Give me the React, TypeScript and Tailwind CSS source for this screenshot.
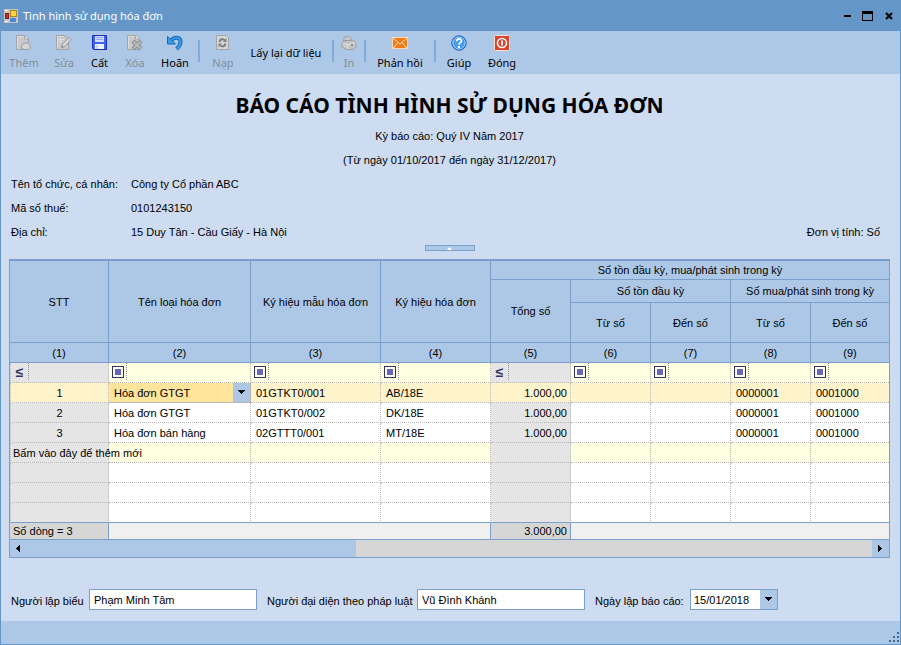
import React from "react";

type IconProps = { children: React.ReactNode };

const Icon = ({ children }: IconProps) => (
  <svg width="16" height="16" viewBox="0 0 16 16" aria-hidden="true" className="block">
    {children}
  </svg>
);

const PageShape = () => (
  <>
    <path d="M0.500 0.500h8l4 3v11h-12z" fill="#c8c9ca" stroke="#a2a4a7" />
    <path d="M1.500 1.500v12M1.500 1.500h6" fill="none" stroke="#dddddd" />
  </>
);

const AddIcon = () => (
  <Icon>
    <PageShape />
    <path d="M8.500 0.500v3.500h4" fill="#e6e6e6" stroke="#a2a4a7" />
    <path d="M5.500 11 7 9.500 8 8h2l1-.5 1.500 1 1.500 1.500 .5 3-2 1.500H8l-2.500-1.500z" fill="#d4d4d4" stroke="#9b9c9e" />
  </Icon>
);

const EditIcon = () => (
  <Icon>
    <PageShape />
    <path d="M3 4.500h5M3 6.500h3" stroke="#e4e4e4" />
    <path d="m5.500 12.500 1-3.500 6.500-6.500 2 2L9 11.500z" fill="#d9d9d9" stroke="#949597" />
    <path d="m5.500 12.500 2-.5-1.500-1.500z" fill="#808183" />
  </Icon>
);

const SaveIcon = () => (
  <Icon>
    <path d="M0.500 0.500h14v14h-13l-1-1z" fill="#3f66ea" stroke="#1a2cc0" />
    <rect x="3" y="1" width="9" height="6" fill="#d3def9" />
    <path d="M4 2.500h7M4 4.500h7" stroke="#93a9ee" />
    <rect x="3" y="9" width="9" height="5" fill="#eef2fc" />
    <rect x="4" y="10" width="2" height="4" fill="#c6d2f6" />
  </Icon>
);

const DeleteIcon = () => (
  <Icon>
    <PageShape />
    <path d="M8.500 0.500v3.500h4" fill="#e6e6e6" stroke="#a2a4a7" />
    <path d="m6 6 8 8m0-8-8 8" stroke="#8a8b8d" strokeWidth="4" />
    <path d="m6.500 6.500 7 7m0-7-7 7" stroke="#bcbcbc" strokeWidth="2" />
  </Icon>
);

const UndoIcon = () => (
  <Icon>
    <path d="M4 5.500c3.500-4 9-3.500 9.500.5.300 3-1 5.500-4 8" fill="none" stroke="#1769b8" strokeWidth="4" />
    <path d="M4 5.500c3.500-4 9-3.500 9.500.5.300 3-1 5.500-4 8" fill="none" stroke="#3b9de8" strokeWidth="2" />
    <path d="M0.500 1.500v7.500h8L5.500 6z" fill="#3b9de8" stroke="#1769b8" />
  </Icon>
);

const ReloadIcon = () => (
  <Icon>
    <path d="M1.500 0.500h10l2 2v12h-12z" fill="#d6d6d6" stroke="#a2a4a7" />
    <path d="M4.500 7c.5-3 3-3.500 5-2M10.500 8.500c-.5 3-3 3.500-5 2" fill="none" stroke="#7c7d7f" strokeWidth="2" />
    <path d="M11.500 3v4H8zM3.500 12.500v-4H7z" fill="#7c7d7f" />
  </Icon>
);

const PrintIcon = () => (
  <Icon>
    <path d="M2.500 5.500 3.500 2l5-.5 2.500 4z" fill="#c9c9c9" stroke="#a3a4a6" />
    <path d="M1 8.500 3 6l9-1 3 3v4l-3 2.500H5L1 12z" fill="#c6c6c6" stroke="#9b9c9e" />
    <path d="m1.500 8.500 5 1.500v4M6.500 10l8-2" fill="none" stroke="#e0e0e0" />
    <rect x="10" y="9" width="2" height="2" fill="#8d8d8d" />
  </Icon>
);

const MailIcon = () => (
  <Icon>
    <rect x="0.500" y="2.500" width="15" height="11" fill="#f47a16" stroke="#fbd9b4" />
    <path d="m1.500 3.500 6.500 5.500 6.500-5.500M1.500 13l4.500-5.500M14.500 13 10 7.500" fill="none" stroke="#ffe6cc" />
  </Icon>
);

const HelpIcon = () => (
  <Icon>
    <circle cx="8" cy="8" r="7.200" fill="#4a9bea" stroke="#1d5fae" />
    <circle cx="8" cy="8" r="6" fill="none" stroke="#9fd0fa" />
    <path d="M5.800 6.200c0-3 4.600-3 4.600-.3C10.400 7.600 8 7.600 8 9.800" fill="none" stroke="#ffffff" strokeWidth="1.600" />
    <rect x="7" y="11" width="2" height="2" fill="#ffffff" />
  </Icon>
);

const CloseIcon = () => (
  <Icon>
    <rect x="0.500" y="0.500" width="15" height="15" rx="1" fill="#d9442a" stroke="#f8ded8" />
    <circle cx="8" cy="8" r="4.500" fill="none" stroke="#ffffff" strokeWidth="1.600" />
    <path d="M8 5.500v5" stroke="#ffffff" strokeWidth="1.800" />
  </Icon>
);

const AppIcon = () => (
  <svg width="14" height="14" viewBox="0 0 14 14" aria-hidden="true" className="block">
    <rect width="14" height="14" fill="#c9c4bd" />
    <rect x="1.500" y="4.500" width="3" height="5" fill="#c0302a" stroke="#7c2320" />
    <rect x="6.500" y="1.500" width="6" height="6" fill="#ffd43c" stroke="#a88424" />
    <rect x="6" y="9" width="6" height="4" fill="#4c86dc" />
    <path d="M1 1.500h3M1 12.500h3" stroke="#f4f4f4" />
  </svg>
);

const Arrow = ({ dir }: { dir: "down" | "left" | "right" }) => {
  const d = { down: "M0 1h7L3.500 5z", left: "M5 0v7L1 3.500z", right: "M1 0v7l4-3.500z" }[dir];
  return (
    <svg width="7" height="7" viewBox="0 0 7 7" aria-hidden="true" className="block" shapeRendering="crispEdges">
      <path d={d} fill="#000000" />
    </svg>
  );
};

type ToolProps = { label: string; width: string; icon: React.ReactNode; disabled?: boolean };

const Tool = ({ label, width, icon, disabled }: ToolProps) => (
  <button
    type="button"
    disabled={disabled}
    className={`flex h-full shrink-0 flex-col items-center gap-1 whitespace-nowrap pt-1 leading-4 text-black disabled:text-[#858c96] ${width}`}
  >
    {icon}
    {label}
  </button>
);

const Divider = () => <div className="mx-[3px] mt-[9px] h-[22px] w-[2px] shrink-0 bg-[#82abda]" />;

const headCell = "border-b border-r border-[#7b9fcb] p-0 font-normal last:border-r-0";
const dotted = "border-b border-r border-dotted border-[#b9b9b9] last:border-r-0";

const ListFilter = ({ name }: { name: string }) => (
  <td className={`p-0 ${dotted} bg-[#ffffe1]`}>
    <div className="flex h-[19px]">
      <div className="mb-[2px] flex w-[18px] shrink-0 justify-center border-r border-dotted border-[#909090] pt-[3px]">
        <button type="button" aria-label={`Lọc ${name}`} className="flex h-3 w-3 items-center justify-center border border-[#333355] bg-white">
          <span className="block h-[6px] w-[6px] bg-[#6666bb]" />
        </button>
      </div>
      <input aria-label={name} className="w-0 flex-1 bg-transparent px-1 outline-none" />
    </div>
  </td>
);

const NumberFilter = ({ name, first }: { name: string; first?: boolean }) => (
  <td className={`bg-[#e5e5e5] p-0 ${dotted} ${first ? "border-l" : ""}`}>
    <div className="flex h-[19px]">
      <button
        type="button"
        aria-label={`Lọc ${name}`}
        className="mb-[2px] w-[18px] shrink-0 border-r border-dotted border-[#909090] text-center text-sm font-bold leading-4 text-[#333366]"
      >
        ≤
      </button>
      <input aria-label={name} className="w-0 flex-1 bg-transparent px-1 outline-none" />
    </div>
  </td>
);

const rows = [
  { no: 1, name: "Hóa đơn GTGT", form: "01GTKT0/001", sign: "AB/18E" },
  { no: 2, name: "Hóa đơn GTGT", form: "01GTKT0/002", sign: "DK/18E" },
  { no: 3, name: "Hóa đơn bán hàng", form: "02GTTT0/001", sign: "MT/18E" },
];

const InvoiceTable = () => (
  <table className="w-full table-fixed border-separate border-spacing-0">
    <colgroup>
      <col className="w-[99px]" />
      <col className="w-[142px]" />
      <col className="w-[130px]" />
      <col className="w-[110px]" />
      <col className="w-[80px]" />
      <col className="w-[80px]" />
      <col className="w-[80px]" />
      <col className="w-[80px]" />
      <col />
    </colgroup>
    <thead className="bg-[#adc8e6]">
      <tr className="h-[19px]">
        <th rowSpan={3} className={headCell}>STT</th>
        <th rowSpan={3} className={headCell}>Tên loại hóa đơn</th>
        <th rowSpan={3} className={headCell}>Ký hiệu mẫu hóa đơn</th>
        <th rowSpan={3} className={headCell}>Ký hiệu hóa đơn</th>
        <th colSpan={5} className={headCell}>Số tồn đầu kỳ, mua/phát sinh trong kỳ</th>
      </tr>
      <tr className="h-[23px]">
        <th rowSpan={2} className={headCell}>Tổng số</th>
        <th colSpan={2} className={headCell}>Số tồn đầu kỳ</th>
        <th colSpan={2} className={headCell}>Số mua/phát sinh trong kỳ</th>
      </tr>
      <tr className="h-10">
        <th className={headCell}>Từ số</th>
        <th className={headCell}>Đến số</th>
        <th className={headCell}>Từ số</th>
        <th className={headCell}>Đến số</th>
      </tr>
      <tr className="h-5">
        {[1, 2, 3, 4, 5, 6, 7, 8, 9].map((n) => (
          <th key={n} className={headCell}>({n})</th>
        ))}
      </tr>
    </thead>
    <tbody>
      <tr className="h-5">
        <NumberFilter name="STT" first />
        <ListFilter name="Tên loại hóa đơn" />
        <ListFilter name="Ký hiệu mẫu hóa đơn" />
        <ListFilter name="Ký hiệu hóa đơn" />
        <NumberFilter name="Tổng số" />
        <ListFilter name="Tồn từ số" />
        <ListFilter name="Tồn đến số" />
        <ListFilter name="Mua từ số" />
        <ListFilter name="Mua đến số" />
      </tr>
      {rows.map((r, i) => {
        const fill = i === 0 ? "bg-[#fff3cb]" : "bg-white";
        const lock = i === 0 ? "bg-[#fff3cb]" : "bg-[#e5e5e5]";
        return (
          <tr key={r.no} className="h-5">
            <td className={`border-l p-0 text-center ${dotted} ${lock}`}>{r.no}</td>
            {i === 0 ? (
              <td className="border-b border-r border-[#b4b4b4] bg-[#ffe49b] p-0">
                <div className="relative">
                  <select aria-label="Tên loại hóa đơn" className="block h-[19px] w-full appearance-none bg-transparent pl-[5px] outline-none">
                    <option>Hóa đơn GTGT</option>
                    <option>Hóa đơn bán hàng</option>
                  </select>
                  <span className="pointer-events-none absolute inset-y-0 right-0 flex w-[17px] items-center justify-center bg-[#adc8e6]">
                    <Arrow dir="down" />
                  </span>
                </div>
              </td>
            ) : (
              <td className={`py-0 pl-[5px] pr-0 ${dotted} ${fill}`}>{r.name}</td>
            )}
            <td className={`py-0 pl-[5px] pr-0 ${dotted} ${fill}`}>{r.form}</td>
            <td className={`py-0 pl-[5px] pr-0 ${dotted} ${fill}`}>{r.sign}</td>
            <td className={`py-0 pl-0 pr-[3px] text-right ${dotted} ${lock}`}>1.000,00</td>
            <td className={`p-0 ${dotted} ${fill}`} />
            <td className={`p-0 ${dotted} ${fill}`} />
            <td className={`py-0 pl-[5px] pr-0 ${dotted} ${fill}`}>0000001</td>
            <td className={`py-0 pl-[5px] pr-0 ${dotted} ${fill}`}>0001000</td>
          </tr>
        );
      })}
      <tr className="h-5">
        <td className={`border-l bg-[#e5e5e5] py-0 pl-[2px] pr-0 ${dotted}`}>
          <button type="button" className="block whitespace-nowrap">Bấm vào đây để thêm mới</button>
        </td>
        {[2, 3, 4, 5, 6, 7, 8, 9].map((c) => (
          <td key={c} className={`p-0 ${dotted} ${c === 5 ? "bg-[#e5e5e5]" : "bg-[#ffffe1]"}`} />
        ))}
      </tr>
      {[0, 1, 2].map((b) => (
        <tr key={b} className="h-5">
          {[1, 2, 3, 4, 5, 6, 7, 8, 9].map((c) => (
            <td
              key={c}
              className={`p-0 ${c === 1 ? "border-l" : ""} ${dotted} ${
                b === 2 ? "[border-bottom:1px_solid_#7b9fcb]" : ""
              } ${c === 1 || c === 5 ? "bg-[#e5e5e5]" : "bg-white"}`}
            />
          ))}
        </tr>
      ))}
    </tbody>
    <tfoot className="bg-[#f0f0f0]">
      <tr className="h-[17px]">
        <td className="border-b border-r border-[#7b9fcb] bg-[#d6d6d6] py-0 pl-[3px] pr-0">Số dòng = 3</td>
        <td colSpan={3} className="border-b border-r border-[#7b9fcb] p-0" />
        <td className="border-b border-r border-[#7b9fcb] bg-[#d6d6d6] py-0 pl-0 pr-[3px] text-right">3.000,00</td>
        <td colSpan={4} className="border-b border-[#7b9fcb] p-0" />
      </tr>
    </tfoot>
  </table>
);

export default function App() {
  return (
    <div className="flex min-h-screen flex-col border-x border-b border-[#6496c8] bg-[#cddcf1] font-['Liberation_Sans',sans-serif] text-[11px] leading-4 text-black">
      <header className="flex h-[31px] shrink-0 items-center justify-between bg-[#6496c8] pl-[3px] pr-[6px] font-['Noto_Sans',sans-serif]">
        <div className="flex items-center gap-[5px] text-white">
          <AppIcon />
          <span>Tình hình sử dụng hóa đơn</span>
        </div>
        <div className="flex items-center gap-[11px]">
          <button type="button" aria-label="Thu nhỏ" className="flex h-3 w-[7px] items-center">
            <span className="block h-[2px] w-full bg-black" />
          </button>
          <button type="button" aria-label="Phóng to" className="block h-[10px] w-[11px] border border-t-[3px] border-black" />
          <button type="button" aria-label="Đóng cửa sổ" className="block">
            <svg width="10" height="8" viewBox="0 0 10 8" aria-hidden="true">
              <path d="m2 1 6 6m0-6-6 6" stroke="#000000" strokeWidth="2.200" />
            </svg>
          </button>
        </div>
      </header>

      <nav aria-label="Thanh công cụ" className="flex h-[43px] shrink-0 items-start bg-[#adc8e6] pl-[3px] font-['Noto_Sans',sans-serif]">
        <Tool label="Thêm" width="w-10" icon={<AddIcon />} disabled />
        <Tool label="Sửa" width="w-10" icon={<EditIcon />} disabled />
        <Tool label="Cất" width="w-[31px]" icon={<SaveIcon />} />
        <Tool label="Xóa" width="w-10" icon={<DeleteIcon />} disabled />
        <Tool label="Hoãn" width="w-10" icon={<UndoIcon />} />
        <Divider />
        <Tool label="Nạp" width="w-10" icon={<ReloadIcon />} disabled />
        <button type="button" className="h-full w-[86px] shrink-0 whitespace-nowrap">Lấy lại dữ liệu</button>
        <Divider />
        <Tool label="In" width="w-6" icon={<PrintIcon />} disabled />
        <Divider />
        <Tool label="Phản hồi" width="w-[62px]" icon={<MailIcon />} />
        <Divider />
        <Tool label="Giúp" width="w-10" icon={<HelpIcon />} />
        <Tool label="Đóng" width="w-[46px]" icon={<CloseIcon />} />
      </nav>

      <main className="flex flex-1 flex-col pb-[11px] pl-2 pr-[10px]">
        <h1 className="pt-[17px] text-center font-['Noto_Sans',sans-serif] text-[21px] font-bold leading-7">BÁO CÁO TÌNH HÌNH SỬ DỤNG HÓA ĐƠN</h1>
        <div className="pt-[5px] text-center leading-6">
          <p>Kỳ báo cáo: Quý IV Năm 2017</p>
          <p>(Từ ngày 01/10/2017 đến ngày 31/12/2017)</p>
        </div>
        <div className="flex items-end justify-between pl-[2px] pr-[10px] leading-6">
          <dl className="grid grid-cols-[120px_auto]">
            <dt>Tên tổ chức, cá nhân:</dt>
            <dd>Công ty Cổ phần ABC</dd>
            <dt>Mã số thuế:</dt>
            <dd>0101243150</dd>
            <dt>Địa chỉ:</dt>
            <dd>15 Duy Tân - Cầu Giấy - Hà Nội</dd>
          </dl>
          <p>Đơn vị tính: Số</p>
        </div>
        <button
          type="button"
          aria-label="Thu gọn"
          className="mx-auto mb-2 mt-px flex h-[6px] w-[50px] shrink-0 items-center justify-center border border-[#7b9fcb] bg-[#adc8e6]"
        >
          <svg width="7" height="4" viewBox="0 0 7 4" aria-hidden="true" className="block">
            <path d="M1 4h5L3.500 1z" fill="#ffffff" />
          </svg>
        </button>

        <div className="border border-t-2 border-[#7b9fcb]">
          <InvoiceTable />
          <div className="flex h-[17px] bg-[#d6d6d6]">
            <button type="button" aria-label="Cuộn trái" className="flex w-[17px] items-center justify-center bg-[#adc8e6]">
              <Arrow dir="left" />
            </button>
            <div className="w-[329px] bg-[#adc8e6]" />
            <button type="button" aria-label="Cuộn phải" className="ml-auto flex w-[17px] items-center justify-center bg-[#adc8e6]">
              <Arrow dir="right" />
            </button>
          </div>
        </div>

        <form className="mt-auto flex items-center pl-[2px] pt-[31px]">
          <label htmlFor="preparer" className="w-[78px] shrink-0 whitespace-nowrap pt-[2px]">Người lập biểu</label>
          <input id="preparer" defaultValue="Phạm Minh Tâm" className="mr-[10px] h-[21px] w-[168px] border border-[#7b9fcb] bg-white px-1 outline-none" />
          <label htmlFor="representative" className="w-[150px] shrink-0 whitespace-nowrap pt-[2px]">Người đại diện theo pháp luật</label>
          <input id="representative" defaultValue="Vũ Đình Khánh" className="mr-[10px] h-[21px] w-[168px] border border-[#7b9fcb] bg-white px-1 outline-none" />
          <label htmlFor="report-date" className="w-[95px] shrink-0 whitespace-nowrap pt-[2px]">Ngày lập báo cáo:</label>
          <div className="flex h-[21px] w-[88px] border border-[#7b9fcb] bg-white">
            <input id="report-date" defaultValue="15/01/2018" className="w-0 flex-1 pl-[3px] outline-none" />
            <button type="button" aria-label="Chọn ngày" className="flex w-[17px] items-center justify-center bg-[#adc8e6]">
              <Arrow dir="down" />
            </button>
          </div>
        </form>
      </main>

      <footer className="flex h-[23px] shrink-0 items-end justify-end bg-[#adc8e6] pb-px">
        <svg width="11" height="11" viewBox="0 0 11 11" aria-hidden="true" className="block">
          <path d="M8 0h2v2H8zM8 4h2v2H8zM4 4h2v2H4zM8 8h2v2H8zM4 8h2v2H4zM0 8h2v2H0z" fill="#46648c" />
        </svg>
      </footer>
    </div>
  );
}
